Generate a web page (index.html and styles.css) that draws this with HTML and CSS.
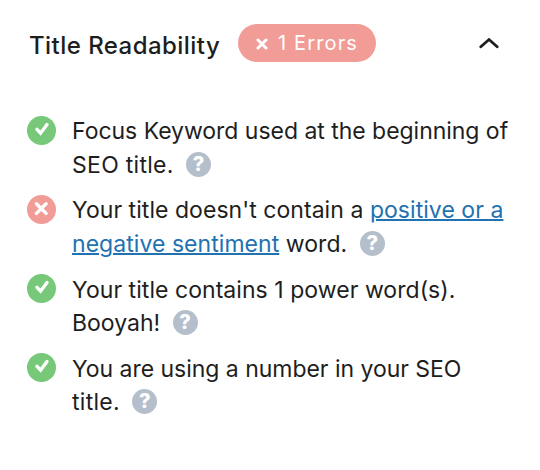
FILE: index.html
```html
<!DOCTYPE html>
<html lang="en">
<head>
  <meta charset="UTF-8" />
  <meta name="viewport" content="width=device-width, initial-scale=1.0" />
  <title>Title Readability</title>
  <link rel="stylesheet" href="styles.css">
</head>
<body>
  <div class="panel">
    <div class="panel-header">
      <h2>Title Readability</h2>
      <span class="badge">
        <svg viewBox="0 0 12 12"><path d="M2 2l8 8M10 2l-8 8" /></svg>
        <span>1 Errors</span>
      </span>
      <svg class="toggle" viewBox="0 0 20 12"><path d="M1.800 9.800L10 2.500l8.200 7.300" /></svg>
    </div>

    <ul class="tests">
      <li>
        <svg class="status ok" viewBox="0 0 29 29"><circle cx="14.500" cy="14.500" r="14.500" /><path d="M10 13.300l3.600 3.900 6.400-8.600" /></svg>
        <div><span class="tight">Focus Keyword used at the beginning of</span><br><span class="loose">SEO title.</span> <span class="help">?</span></div>
      </li>
      <li>
        <svg class="status fail" viewBox="0 0 29 29"><circle cx="14.500" cy="14.500" r="14.500" /><path d="M9.500 8.800l9.600 9.600M19.100 8.800l-9.600 9.600" /></svg>
        <div><span class="wide">Your title doesn't contain a <a href="#">positive or a</a></span><br><span class="wide"><a href="#">negative sentiment</a> word.</span> <span class="help">?</span></div>
      </li>
      <li>
        <svg class="status ok" viewBox="0 0 29 29"><circle cx="14.500" cy="14.500" r="14.500" /><path d="M10 13.300l3.600 3.900 6.400-8.600" /></svg>
        <div><span class="wide">Your title contains 1 power word(s).</span><br>Booyah! <span class="help">?</span></div>
      </li>
      <li>
        <svg class="status ok" viewBox="0 0 29 29"><circle cx="14.500" cy="14.500" r="14.500" /><path d="M10 13.300l3.600 3.900 6.400-8.600" /></svg>
        <div><span class="tight">You are using a number in your SEO</span><br><span class="loose">title.</span> <span class="help">?</span></div>
      </li>
    </ul>
  </div>
</body>
</html>
```

FILE: styles.css
```css
body {
  margin: 0;
  background: #fff;
  color: #1e1e1e;
  font-family: Inter, sans-serif;
}
.panel {
  padding: 24px 27px;
}
.panel-header {
  display: flex;
  align-items: center;
  height: 38px;
  padding-left: 2px;
}
h2 {
  margin: 0;
  padding-top: 4px;
  width: 190px;
  font-size: 24px;
  font-weight: 500;
  letter-spacing: 0.45px;
  white-space: nowrap;
}
.badge {
  display: flex;
  align-items: center;
  justify-content: center;
  gap: 10px;
  box-sizing: border-box;
  width: 138px;
  height: 38px;
  margin-left: 19px;
  border-radius: 19px;
  background: #f19c96;
  color: #fff;
  font-size: 20px;
  letter-spacing: 1.15px;
}
.badge svg {
  width: 12px;
  height: 12px;
  margin-top: 2px;
}
svg path {
  fill: none;
  stroke: #fff;
  stroke-width: 3.4;
  stroke-linecap: round;
}
.badge path {
  stroke-width: 3;
}
.toggle {
  width: 20px;
  height: 12px;
  margin-left: auto;
  margin-right: 14px;
}
.toggle path {
  stroke: #1e1e1e;
  stroke-width: 2.8;
}
.tests {
  list-style: none;
  margin: 53px 0 0;
  padding: 0;
}
.tests li {
  display: flex;
  gap: 16px;
  height: 67px;
  margin-bottom: 12.300px;
  font-size: 23px;
  line-height: 33.500px;
  white-space: nowrap;
}
.status {
  flex: none;
  width: 29px;
  height: 29px;
  margin-top: 0.600px;
}
.ok {
  fill: #78c87a;
}
.fail {
  fill: #f19c96;
}
.tight {
  letter-spacing: -0.03px;
}
.wide {
  letter-spacing: 0.05px;
}
.loose {
  letter-spacing: 0.28px;
}
a {
  color: #2271b1;
  text-decoration-thickness: 2px;
}
.help {
  display: inline-block;
  width: 25px;
  height: 25px;
  margin-left: 6px;
  border-radius: 50%;
  background: #b4bfcb;
  color: #fff;
  font-size: 20px;
  font-weight: 800;
  line-height: 25px;
  text-align: center;
  vertical-align: 2px;
}
```
